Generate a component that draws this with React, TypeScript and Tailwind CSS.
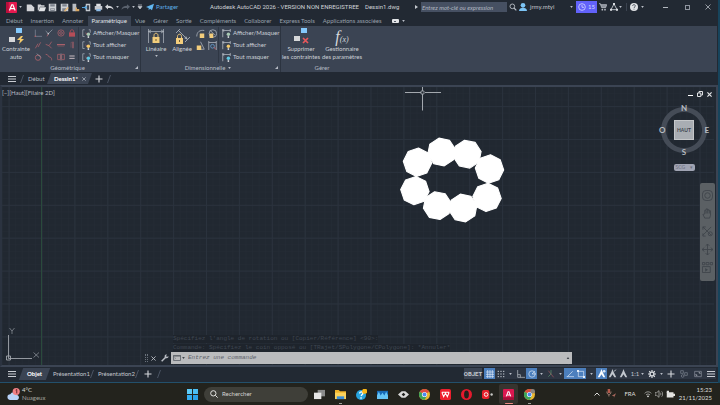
import React from "react";

type Kids = { children?: React.ReactNode };

/* ---------- small shared pieces ---------- */

function Caret({ className = "" }: { className?: string }) {
  return (
    <svg viewBox="0 0 4 3" className={`h-[2px] w-[3px] shrink-0 ${className}`} aria-hidden="true">
      <path d="M0 0h4L2 3z" fill="#b9bec7" />
    </svg>
  );
}

function Icon({ children, box = 12, className = "h-3 w-3" }: Kids & { box?: number; className?: string }) {
  return (
    <svg viewBox={`0 0 ${box} ${box}`} className={`shrink-0 ${className}`} fill="none" aria-hidden="true">
      {children}
    </svg>
  );
}

function IconButton({ label, className = "w-[11px]", children }: Kids & { label: string; className?: string }) {
  return (
    <button type="button" aria-label={label} className={`flex h-full shrink-0 items-center justify-center ${className}`}>
      {children}
    </button>
  );
}

function Menu() {
  return (
    <svg viewBox="0 0 8 6" className="h-[6px] w-2 shrink-0" aria-hidden="true">
      <path d="M0 .5h8M0 3h8M0 5.5h8" stroke="#c9cdd3" strokeWidth="1" />
    </svg>
  );
}

function Slash() {
  return (
    <svg viewBox="0 0 4 8" className="h-2 w-1 shrink-0" aria-hidden="true">
      <path d="M.5 8L3.5 0" stroke="#566070" strokeWidth=".8" />
    </svg>
  );
}

function Plus() {
  return (
    <svg viewBox="0 0 8 8" className="h-2 w-2 shrink-0" aria-hidden="true">
      <path d="M4 .5v7M.5 4h7" stroke="#d5d8dc" strokeWidth="1.1" />
    </svg>
  );
}

/* ---------- title bar ---------- */

function TitleBar() {
  return (
    <header className="flex h-[14px] shrink-0 items-center text-[#c3c7cd]">
      <button type="button" aria-label="Menu AutoCAD" className="ml-[6px] flex h-3 w-[16px] shrink-0 items-center justify-between">
        <Icon className="h-[11px] w-[11px]">
          <rect width="12" height="12" rx="1" fill="#e5194f" />
          <path d="M0 0h3v12H0z" fill="#b80f3c" />
          <path d="M3.8 9.200L6.300 3h1.200L10 9.200M5 7.200h3.900" stroke="#fff" strokeWidth="1.300" />
        </Icon>
        <Caret />
      </button>
      <div className="ml-[3px] flex h-full shrink-0 items-center">
        <IconButton label="Nouveau">
          <Icon className="h-[9px] w-[9px]"><path d="M1 2h6l4 4v5H1z" fill="#d2d4d8" /></Icon>
        </IconButton>
        <IconButton label="Ouvrir">
          <Icon className="h-[9px] w-[9px]"><path d="M1 2h4l1 1h4v2H4L2 10H1z" fill="#d2d4d8" /><path d="M4 5.500h8L10 11H2z" fill="#e2e4e7" /></Icon>
        </IconButton>
        <IconButton label="Enregistrer">
          <Icon className="h-[9px] w-[9px]"><path d="M1 1h10v10H1z" fill="#cdd0d4" /><path d="M3 1.500h6v3H3zM3 7h6v4H3z" fill="#7d838d" /><path d="M4 8.500h4" stroke="#ddd" /></Icon>
        </IconButton>
        <IconButton label="Enregistrer sous" className="w-3">
          <Icon className="h-[9px] w-[9px]"><path d="M1 1h10v10H1z" fill="#cdd0d4" /><path d="M3 1.500h6v3H3zM3 7h5v4H3z" fill="#7d838d" /><path d="M6 11l5-5" stroke="#e9b872" strokeWidth="2" /></Icon>
        </IconButton>
        <IconButton label="Ouvrir depuis le Web">
          <Icon className="h-[9px] w-[9px]"><path d="M2 1h5v10H2z" fill="#b8bcc2" /><path d="M6 6h2v2h3v3H6z" fill="#d7a662" /></Icon>
        </IconButton>
        <IconButton label="Enregistrer sur le Web">
          <Icon className="h-[9px] w-[9px]"><path d="M5 1h6v10H5z" fill="#c4c8ce" /><path d="M6.500 3h3v6h-3z" fill="#39424f" /><path d="M0 6h6M4 4l2 2-2 2" stroke="#58a6de" strokeWidth="1.500" /></Icon>
        </IconButton>
        <IconButton label="Imprimer" className="w-3">
          <Icon className="h-[9px] w-[9px]"><path d="M3 1h6v3H3z" fill="#dfe1e4" /><path d="M1 4h10v5H1z" fill="#c7cad0" /><path d="M3 8h6v3H3z" fill="#8dbbe6" /></Icon>
        </IconButton>
        <IconButton label="Annuler" className="w-[11px]">
          <Icon className="h-[9px] w-[9px]"><path d="M0 5l4-3.500v2C8 3.500 11 5 11.500 9 9.500 6.800 7 6.500 4 6.700v2z" fill="#d2d4d8" /></Icon>
        </IconButton>
        <Caret className="mx-px" />
        <IconButton label="Rétablir">
          <Icon className="h-[9px] w-[9px]"><path d="M12 5L8 1.500v2C4 3.500 1 5 .5 9 2.500 6.800 5 6.500 8 6.700v2z" fill="#59616d" /></Icon>
        </IconButton>
        <Caret className="mx-px" />
        <IconButton label="Personnaliser" className="w-2">
          <Icon box={6} className="h-[6px] w-[6px]"><path d="M1 1h4M1 2.500h4L3 5z" stroke="#c3c7cd" strokeWidth=".7" fill="#c3c7cd" /></Icon>
        </IconButton>
      </div>
      <button type="button" className="ml-[2px] flex w-[31px] shrink-0 items-center gap-[2px] text-[#5fb0e8]">
        <Icon className="h-2 w-2"><path d="M0 6l12-5-3 10-3-2.500L4 11V7.500z" fill="#62b7f0" /></Icon>
        Partager
      </button>
      <div className="ml-[33px] flex w-[205px] shrink-0 gap-[6px] whitespace-nowrap font-[Roboto,sans-serif] text-[#d0d3d8]">
        <h1>Autodesk AutoCAD 2026 - VERSION NON ENREGISTREE</h1>
        <span>Dessin1.dwg</span>
      </div>
      <svg viewBox="0 0 3 4" className="h-1 w-[3px] shrink-0" aria-hidden="true"><path d="M0 0v4l3-2z" fill="#c3c7cd" /></svg>
      <input
        type="search"
        aria-label="Rechercher"
        placeholder="Entrez mot-clé ou expression"
        className="ml-[3px] h-[10px] min-w-0 flex-1 bg-[#465062] px-px italic placeholder:text-[#b0b6c0]"
      />
      <IconButton label="Lancer la recherche" className="w-3">
        <Icon className="h-2 w-2"><circle cx="5" cy="5" r="3.500" stroke="#b5bac2" strokeWidth="1.400" /><path d="M7.500 7.500L11 11" stroke="#b5bac2" strokeWidth="1.800" /></Icon>
      </IconButton>
      <button type="button" className="flex w-[57px] shrink-0 items-center justify-between">
        <span className="flex items-center gap-[3px]">
          <Icon className="h-2 w-2"><circle cx="6" cy="3.500" r="3.500" fill="#7cc4f5" /><path d="M0 12c0-4 3-5 6-5s6 1 6 5z" fill="#7cc4f5" /></Icon>
          jrmy.mtyi
        </span>
        <Caret className="mr-[3px]" />
      </button>
      <button type="button" aria-label="15 jours restants" className="flex h-3 w-[21px] shrink-0 items-center justify-center gap-[2px] bg-[#6262fa] text-[#d6d7ff]">
        <Icon className="h-2 w-2"><circle cx="6" cy="6" r="5" stroke="#d6d7ff" strokeWidth="1.200" /><path d="M6 3v3.500h3" stroke="#d6d7ff" strokeWidth="1.200" /></Icon>
        15
      </button>
      <IconButton label="Boutique">
        <Icon className="h-2 w-2"><path d="M0 1h2l2 6h6l1.500-4.500h-9" stroke="#b9bdc4" strokeWidth="1.200" fill="#8b919b" /><circle cx="5" cy="10" r="1.300" fill="#b9bdc4" /><circle cx="9" cy="10" r="1.300" fill="#b9bdc4" /></Icon>
      </IconButton>
      <IconButton label="Applications">
        <Icon className="h-2 w-2"><path d="M6 1.500l4.500 8.500h-9z" stroke="#c9cdd3" strokeWidth="1.300" /><path d="M4.500 0h3v3h-3zM0 8.500h3v3H0zM9 8.500h3v3H9z" fill="#d9dce0" /></Icon>
      </IconButton>
      <Caret />
      <span className="ml-1 h-2 w-px bg-[#3b4350]" />
      <IconButton label="Aide" className="w-[14px]">
        <Icon className="h-2 w-2"><circle cx="6" cy="6" r="6" fill="#dfe1e4" /><path d="M4 4.500c0-3 4-2.500 4-.3C8 6 6 6 6 7.500M6 8.600v1.200" stroke="#39414d" strokeWidth="1.200" /></Icon>
      </IconButton>
      <Caret />
      <div className="ml-[10px] flex h-full shrink-0">
        <IconButton label="Réduire" className="w-[22px]"><span className="h-px w-[5px] bg-[#b3b8c0]" /></IconButton>
        <IconButton label="Agrandir" className="w-[22px]"><span className="h-[5px] w-[5px] border border-[#8f959f]" /></IconButton>
        <IconButton label="Fermer" className="w-5">
          <Icon box={6} className="h-[6px] w-[6px]"><path d="M.5.5l5 5M5.500.5l-5 5" stroke="#b3b8c0" strokeWidth=".8" /></Icon>
        </IconButton>
      </div>
    </header>
  );
}

/* ---------- ribbon ---------- */

const tabs = [
  "Début", "Insertion", "Annoter", "Paramétrique", "Vue", "Gérer", "Sortie",
  "Compléments", "Collaborer", "Express Tools", "Applications associées",
];

function RibbonTabs() {
  return (
    <nav className="flex h-3 shrink-0 items-end whitespace-nowrap pl-[2px] text-[#98a0ab]">
      {tabs.map((t) => (
        <a
          key={t}
          href="#ruban"
          className={`flex h-[10px] items-center px-1 ${t === "Paramétrique" ? "bg-[#3b4453] text-[#e4e6e9]" : ""}`}
        >
          {t}
        </a>
      ))}
      <button type="button" aria-label="Réduire le ruban" className="ml-[6px] flex h-[10px] items-center gap-[3px]">
        <span className="flex h-1 w-[7px] items-center justify-center rounded-[1px] bg-[#e3e5e8]">
          <span className="h-px w-[2px] bg-[#545c69]" />
        </span>
        <Caret />
      </button>
    </nav>
  );
}

const redStroke = "#a8606a";
const greyStroke = "#99a1ad";

const constraintIcons: [string, React.ReactNode][] = [
  ["Coïncidence", <><path d="M2 1v10h10" stroke="#8790a0" /><circle cx="2" cy="11" r="1.200" fill={redStroke} /></>],
  ["Colinéaire", <><path d="M1 3l4 4 6-6" stroke={greyStroke} strokeWidth="1.100" /><path d="M5 7l-2 4" stroke={redStroke} strokeWidth="1.300" /><circle cx="5" cy="7" r="1.200" fill="#c3c7cd" /></>],
  ["Concentrique", <><circle cx="6" cy="6" r="4.700" stroke={redStroke} strokeWidth="1.200" /><circle cx="6" cy="6" r="2" stroke={redStroke} strokeWidth="1.200" /></>],
  ["Fixe", <><path d="M1.500 5h9v6.500h-9z" fill="#b54d58" /><path d="M3.500 5V3.500c0-3 5-3 5 0V5" stroke="#b54d58" strokeWidth="1.400" /></>],
  ["Parallèle", <path d="M2 11l4-7M6 9l4-7" stroke={redStroke} strokeWidth="1.200" />],
  ["Perpendiculaire", <path d="M1 5l5 2 4 4M6 7l4-6" stroke={redStroke} strokeWidth="1.200" />],
  ["Horizontal", <><path d="M0 5.500h12" stroke={redStroke} strokeWidth="2" /><path d="M1 8h10" stroke="#7a5560" strokeWidth=".8" /></>],
  ["Vertical", <><path d="M7.500 1v10" stroke={redStroke} strokeWidth="1.800" /><path d="M4.500 2v8M4.500 2h3" stroke="#7a5560" /></>],
  ["Tangent", <><circle cx="6" cy="7" r="4" stroke={redStroke} strokeWidth="1.300" /><path d="M4 1l7 6" stroke={greyStroke} /></>],
  ["Lissage", <path d="M1 2c5 0 3 4 6 4 3 .5 3 3 3 5" stroke={redStroke} strokeWidth="1.300" />],
  ["Symétrie", <><path d="M1 2h4v8H1zM7 2h4v8H7z" stroke={redStroke} strokeWidth="1.200" /><path d="M6 0v12" stroke={greyStroke} strokeWidth=".6" /></>],
  ["Égal", <path d="M2 4.500h8M2 8h8" stroke="#c9bcc2" strokeWidth="1.500" />],
];

function Bulb({ tone, kind }: { tone: string; kind: "geo" | "dim" }) {
  return (
    <Icon className="h-[9px] w-[9px]">
      {kind === "geo" ? (
        <><path d="M3.500 1H1v9h2.500" stroke="#a6adb8" /><path d="M5 5l2 3" stroke={redStroke} strokeWidth="1.200" /><path d="M9 1h2v4" stroke="#a6adb8" /></>
      ) : (
        <path d="M1 0v11M11 0v4M1 2h10M1 2l2-1.500M1 2l2 1.500" stroke="#b6bbc4" />
      )}
      <circle cx="8.500" cy="7" r="2.300" fill={tone} />
      <path d="M7.500 9.500h2V12h-2z" fill="#cfd2d6" />
    </Icon>
  );
}

function ShowHide({ kind }: { kind: "geo" | "dim" }) {
  const rows: [string, string][] = [["Afficher/Masquer", "#a8c9b4"], ["Tout afficher", "#f3c969"], ["Tout masquer", "#5fc8e2"]];
  return (
    <div className="flex flex-col border-l border-[#2f3744] pl-[3px]">
      {rows.map(([label, tone]) => (
        <button key={label} type="button" className="flex h-[12px] items-center gap-[2px] whitespace-nowrap">
          <Bulb tone={tone} kind={kind} />
          {label}
        </button>
      ))}
    </div>
  );
}

function BigButton({ icon, lines, caret, className }: { icon: React.ReactNode; lines: string[]; caret?: boolean; className: string }) {
  return (
    <button type="button" className={`flex shrink-0 flex-col items-center whitespace-nowrap leading-[8px] ${className}`}>
      <span className="mb-px flex h-[17px] items-center">{icon}</span>
      {lines.map((l) => <span key={l}>{l}</span>)}
      {caret && <Caret className="mt-[2px]" />}
    </button>
  );
}

function Panel({ title, caret, launcher, className, children }: Kids & { title: string; caret?: boolean; launcher?: boolean; className: string }) {
  return (
    <section className={`flex shrink-0 flex-col border-r border-[#2c3440] ${className}`}>
      <div className="flex h-[37px] pt-px">{children}</div>
      <div className="flex h-[9px] items-center pr-[2px] text-[#b7bcc5]">
        <h2 className="flex flex-1 items-center justify-center gap-[3px]">{title}{caret && <Caret />}</h2>
        {launcher && (
          <button type="button" aria-label={`Options ${title}`}>
            <Icon box={4} className="h-[3px] w-[3px]"><path d="M0 4h4V0z" fill="#b7bcc5" /></Icon>
          </button>
        )}
      </div>
    </section>
  );
}

function LockShape({ x, y }: { x: number; y: number }) {
  return (
    <g transform={`translate(${x} ${y})`}>
      <path d="M1.500 4V2.500c0-3 4-3 4 0V4" stroke="#f0c878" strokeWidth="1" fill="none" />
      <path d="M0 4h7v6H0z" fill="#f3cd7c" />
      <path d="M3.500 6v2" stroke="#6b5a35" strokeWidth="1" />
    </g>
  );
}

function Ribbon() {
  return (
    <div id="ruban" className="mr-px flex h-[46px] shrink-0 bg-[#3b4453] text-[#cdd1d7]">
      <Panel title="Géométrique" launcher className="w-[141px]">
        <BigButton
          className="w-8"
          lines={["Contrainte", "auto"]}
          icon={
            <Icon box={16} className="h-4 w-4">
              <path d="M8 0h6v5H8z" fill="#84c8fb" /><path d="M1 9h6v5H1z" fill="#d6d7d9" />
              <path d="M13 8l-4 4h3l-1 4 5-5h-3l2-3z" fill="#f5cb6c" />
            </Icon>
          }
        />
        <div className="grid h-9 w-[46px] grid-cols-4">
          {constraintIcons.map(([label, art]) => (
            <IconButton key={label} label={label}><Icon className="h-2 w-2">{art}</Icon></IconButton>
          ))}
        </div>
        <ShowHide kind="geo" />
      </Panel>
      <Panel title="Dimensionnelle" caret launcher className="w-[140px]">
        <BigButton
          className="w-[30px]"
          lines={["Linéaire"]}
          caret
          icon={
            <Icon box={16} className="h-4 w-4">
              <path d="M.5 1v14M15.500 1v14M.5 3.500h15M3 2L.5 3.500 3 5M13 2l2.500 1.500L13 5" stroke="#b4bac3" strokeWidth=".7" />
              <LockShape x={4.5} y={5} />
            </Icon>
          }
        />
        <BigButton
          className="w-[22px]"
          lines={["Alignée"]}
          icon={
            <Icon box={16} className="h-4 w-4">
              <path d="M2 5l4-4M11 14l5-5M4 2l9 9M13 11l-1-2.500M13 11l-2.500-1" stroke="#b4bac3" strokeWidth=".8" />
              <LockShape x={2} y={6} />
            </Icon>
          }
        />
        <div className="grid h-6 w-[25px] grid-cols-2 pl-[2px]">
          <IconButton label="Rayon"><Icon className="h-[9px] w-[9px]"><path d="M1 10C1 4 5 1 11 2" stroke="#b4bac3" /><path d="M5 6h6v6H5z" fill="#f3cd7c" /></Icon></IconButton>
          <IconButton label="Diamètre"><Icon className="h-[9px] w-[9px]"><circle cx="6.500" cy="6" r="5" stroke="#b4bac3" /><path d="M3 2l6 6" stroke="#b4bac3" /><path d="M2 6h5v6H2z" fill="#f3cd7c" /></Icon></IconButton>
          <IconButton label="Angulaire"><Icon className="h-[9px] w-[9px]"><path d="M6 1l5 10H6" stroke="#b4bac3" /><path d="M1 6h6v6H1z" fill="#f3cd7c" /></Icon></IconButton>
          <IconButton label="Convertir"><Icon className="h-[9px] w-[9px]"><path d="M1 0v12M11 0v12M1 2h10" stroke="#b4bac3" /><circle cx="6" cy="7" r="2.500" stroke="#6ba4d8" /><path d="M8 8l2 3" stroke={redStroke} strokeWidth="1.400" /></Icon></IconButton>
        </div>
        <ShowHide kind="dim" />
      </Panel>
      <section className="flex w-[82px] shrink-0 flex-col">
        <div className="flex h-[37px] pt-px">
          <BigButton
            className="w-10"
            lines={["Supprimer", "les contraintes"]}
            icon={
              <Icon box={16} className="h-4 w-4">
                <path d="M8 0h6v5H8z" fill="#84c8fb" /><path d="M1 8h6v5H1z" fill="#d6d7d9" />
                <path d="M10 10l5 5M15 10l-5 5" stroke="#e8585c" strokeWidth="1.700" />
              </Icon>
            }
          />
          <BigButton
            className="w-[42px]"
            lines={["Gestionnaire", "des paramètres"]}
            icon={<span className="pt-[3px] font-['Liberation_Serif',serif] text-[16px] italic leading-none text-[#d6d9dd]">f<span className="text-[8px]">(x)</span></span>}
          />
        </div>
        <h2 className="flex h-[9px] items-center justify-center text-[#b7bcc5]">Gérer</h2>
      </section>
    </div>
  );
}

/* ---------- drawing tabs ---------- */

function DocTabs() {
  return (
    <nav className="flex h-[13px] shrink-0 items-center pl-2 text-[#b7bcc5]">
      <button type="button" aria-label="Menu des dessins"><Menu /></button>
      <span className="ml-1 flex"><Slash /></span>
      <a href="#dessin" className="ml-1 w-[21px]">Début</a>
      <div className="relative flex h-[11px] w-[41px] items-center justify-between pl-[5px] pr-1 text-white">
        <span className="absolute inset-0 -skew-x-[20deg] bg-[#3b4453]" />
        <a href="#dessin" className="relative font-bold">Dessin1*</a>
        <button type="button" aria-label="Fermer Dessin1" className="relative">
          <Icon box={6} className="h-1 w-1"><path d="M.5.5l5 5M5.500.5l-5 5" stroke="#aab0ba" strokeWidth="1.200" /></Icon>
        </button>
      </div>
      <button type="button" aria-label="Nouveau dessin" className="ml-[5px]"><Plus /></button>
      <span className="ml-1 flex"><Slash /></span>
    </nav>
  );
}

/* ---------- drawing area ---------- */

const octagons: [number, number, number][] = [
  [417.5, 162.3, -86], [441.6, 152, -101], [467.2, 154.2, -101], [489.5, 169, -86],
  [487, 197.4, -86], [463, 208, -101], [437.3, 205.6, -101], [414.9, 190.6, -86],
];

function octagonPoints(cx: number, cy: number, start: number) {
  return Array.from({ length: 8 }, (_, i) => {
    const a = ((start + i * 45) * Math.PI) / 180;
    return `${(cx + 14.2 * Math.cos(a)).toFixed(1)},${(cy + 14.2 * Math.sin(a)).toFixed(1)}`;
  }).join(" ");
}

function ViewCube() {
  return (
    <div className="absolute right-[6px] top-[17px] flex w-[52px] flex-col items-center">
      <div className="relative flex h-[52px] w-[52px] items-center justify-center text-[8px] font-bold leading-none text-[#b9bdc2]">
        <span className="absolute inset-[3px] rounded-full border-[5px] border-[#454c57]" />
        <span className="absolute inset-x-0 top-0 text-center">N</span>
        <span className="absolute inset-x-0 bottom-0 text-center">S</span>
        <span className="absolute left-px">O</span>
        <span className="absolute right-px">E</span>
        <button type="button" className="relative h-5 w-5 border border-[#c5c7ca] bg-[#a9adb3] text-[5px] font-bold text-[#3f464f]">HAUT</button>
      </div>
      <button type="button" className="mt-2 flex h-[7px] w-[21px] items-center justify-between rounded-[2px] bg-[#a0a4b3] px-[2px] text-[5px] leading-none text-[#6c7080]">
        SCG<span>▾</span>
      </button>
    </div>
  );
}

function NavBar() {
  const s = { stroke: "#3f454c", strokeWidth: 1 };
  return (
    <div className="absolute right-px top-24 flex h-[98px] w-[15px] flex-col items-center justify-between rounded-[2px] bg-[#5b6064] py-1">
      <button type="button" aria-label="Disque de navigation" className="mt-[3px]">
        <Icon className="h-[11px] w-[11px]"><rect x=".5" y=".5" width="11" height="11" rx="4" {...s} /><circle cx="6" cy="6" r="3" {...s} /></Icon>
      </button>
      <button type="button" aria-label="Panoramique">
        <Icon className="h-[11px] w-[11px]"><path d="M3 11L1 7l2-.5V2.500h1.500V1h1.500v1h1.700v1h1.600v5l-1 3zM4.500 3v3M6.200 2v4M8 3v3" {...s} /></Icon>
      </button>
      <button type="button" aria-label="Zoom">
        <Icon className="h-[11px] w-[11px]"><path d="M1 1l9 9M10 1L1 10M1 4V1h3M1 8v3h3" {...s} /><circle cx="9" cy="8.500" r="2.200" {...s} /></Icon>
      </button>
      <button type="button" aria-label="Orbite">
        <Icon className="h-[11px] w-[11px]"><path d="M6 0v12M4 2l2-2 2 2M4 10l2 2 2-2" {...s} /><path d="M2.500 4L0 6l2.500 2M9.500 4L12 6l-2.500 2M0 6h12" {...s} /></Icon>
      </button>
      <button type="button" aria-label="ShowMotion" className="mb-1">
        <Icon className="h-[11px] w-[11px]"><path d="M.5.5h2.500v2.500H.5zM4.500.5h3v2.500h-3zM9 .5h2.500v2.500H9zM.5 5h8.500v6.500H.5z" {...s} /><path d="M3.500 6.500v4l3-2z" fill="#3f454c" /></Icon>
      </button>
    </div>
  );
}

function DrawingArea() {
  return (
    <main id="dessin" className="relative min-h-0 flex-1 overflow-hidden border-2 border-[#3b4453] border-l-[#2b3340] bg-[#212831]">
      <svg className="absolute -left-[2px] -top-[87px] h-[405px] w-full min-w-full" aria-hidden="true">
        <defs>
          <pattern id="minor" width="6.580" height="6.580" patternUnits="userSpaceOnUse" x="41.500" y="139">
            <path d="M0 0H6.580M0 0V6.580" stroke="#252c36" strokeWidth="1" fill="none" />
          </pattern>
          <pattern id="major" width="32.900" height="32.900" patternUnits="userSpaceOnUse" x="41.500" y="139">
            <path d="M0 .5H32.900M.5 0V32.900" stroke="#2a323d" strokeWidth="1" fill="none" />
          </pattern>
        </defs>
        <rect width="100%" height="100%" fill="url(#minor)" />
        <rect width="100%" height="100%" fill="url(#major)" />
        <path d="M41.500 87V366" stroke="#2a4a3c" strokeWidth="1" />
        <g fill="#fff" stroke="#fff" strokeWidth="1.100" strokeLinejoin="round">
          {octagons.map(([x, y, a]) => <polygon key={`${x}-${y}`} points={octagonPoints(x, y, a)} />)}
        </g>
        <g stroke="#a3a8ae" strokeWidth="1" fill="none">
          <path d="M405 92.500h16M425 92.500h16M422.500 87v4M422.500 94v16.500" />
          <path d="M421 91h3v3h-3z" strokeWidth=".8" />
        </g>
        <g stroke="#a0a5ac" strokeWidth=".9" fill="none">
          <path d="M8.500 335v23.500H32M6.500 356h4v4h-4z" />
          <path d="M9.500 328l2.500 3 2.500-3M12 331v3M33.500 352.500l5.500 5M39 352.500l-5.500 5" stroke="#858b93" strokeWidth=".8" />
        </g>
      </svg>
      <div className="absolute left-0 top-[2px] flex text-[#b9bdc3]">
        <button type="button">[−]</button><button type="button">[Haut]</button><button type="button">[Filaire 2D]</button>
      </div>
      <div className="absolute right-1 top-1 flex gap-1">
        <button type="button" aria-label="Réduire le dessin" className="flex h-[5px] w-[5px] items-end"><span className="h-px w-[5px] bg-white" /></button>
        <button type="button" aria-label="Restaurer le dessin">
          <Icon box={6} className="h-[6px] w-[6px]"><path d="M2 2V.5h3.500V4H4M.5 2h3.300v3.500H.5z" stroke="#dfe1e4" /></Icon>
        </button>
        <button type="button" aria-label="Fermer le dessin">
          <Icon box={6} className="h-[5px] w-[5px]"><path d="M.5.5l5 5M5.500.5l-5 5" stroke="#e4e6e9" strokeWidth="1.400" /></Icon>
        </button>
      </div>
      <ViewCube />
      <NavBar />
      <div className="absolute bottom-[1px] left-[143px] right-36 font-['Liberation_Mono',monospace]">
        <div className="ml-7 flex flex-col items-start gap-px whitespace-nowrap leading-[8px] text-[#3f4651]">
          <p className="bg-[#1e242c]">Spécifiez l'angle de rotation ou [Copier/Référence] &lt;90&gt;:</p>
          <p className="bg-[#1e242c]">Commande: Spécifiez le coin opposé ou [TRajet/SPolygone/CPolygone]: *Annuler*</p>
        </div>
        <div className="flex h-3 items-center">
          <span className="h-2 w-[3px] shrink-0 border-x border-dotted border-[#6b727c]" />
          <IconButton label="Fermer la ligne de commande" className="w-[11px]">
            <Icon box={6} className="h-[5px] w-[5px]"><path d="M.5.5l5 5M5.500.5l-5 5" stroke="#c3c7cd" strokeWidth="1" /></Icon>
          </IconButton>
          <IconButton label="Personnaliser" className="w-3">
            <Icon className="h-2 w-2"><path d="M1 11l6-6" stroke="#b9bdc4" strokeWidth="2.200" /><path d="M11 3L9 4.500 7.500 3 9 1C6 0 4.500 3 6 5.500 8 7.500 12 6 11 3z" fill="#b9bdc4" /></Icon>
          </IconButton>
          <label className="flex h-full min-w-0 flex-1 items-center gap-[3px] bg-[#babbbd] px-[2px]">
            <span className="flex w-3 shrink-0 items-center gap-px">
              <svg viewBox="0 0 8 6" className="h-[6px] w-2" fill="none" aria-hidden="true"><path d="M.5.5h7v5h-7z" stroke="#5b6067" strokeWidth=".8" /><path d="M0 1h8" stroke="#5b6067" /><path d="M1.500 2.500l1 .8-1 .8" stroke="#5b6067" strokeWidth=".6" /></svg>
              <svg viewBox="0 0 4 3" className="h-[2px] w-[3px]" aria-hidden="true"><path d="M0 0h4L2 3z" fill="#3f444b" /></svg>
            </span>
            <input aria-label="Commande" placeholder="Entrez une commande" className="min-w-0 flex-1 bg-transparent italic placeholder:text-[#5e636b]" />
            <svg viewBox="0 0 4 3" className="h-[2px] w-1" aria-hidden="true"><path d="M0 3h4L2 0z" fill="#3f444b" /></svg>
          </label>
        </div>
      </div>
    </main>
  );
}

/* ---------- layout tabs and status bar ---------- */

function StatusButton({ label, on, className = "w-[11px]", children }: Kids & { label: string; on?: boolean; className?: string }) {
  return (
    <button
      type="button"
      aria-label={label}
      className={`flex h-[11px] shrink-0 items-center justify-center ${on ? "bg-[#4c7fbd]" : "bg-[#2d3542]"} ${className}`}
    >
      {children}
    </button>
  );
}

function Person({ fill }: { fill: string }) {
  return <path d="M6 0l1.500 4L11 11H8.500L6 7l-2.500 4H1l3.500-7z" fill={fill} />;
}

function StatusBar() {
  const w = "#c3c8cf";
  return (
    <footer className="flex h-4 shrink-0 items-center border-b border-[#23506b] pb-[2px] pl-2 text-[#c3c7cd]">
      <button type="button" aria-label="Menu des présentations"><Menu /></button>
      <nav className="ml-[5px] flex items-center">
        <a href="#dessin" className="relative flex h-3 w-[27px] items-center justify-center font-bold text-white">
          <span className="absolute inset-0 -skew-x-[20deg] bg-[#3b4453]" />
          <span className="relative">Objet</span>
        </a>
        <a href="#dessin" className="ml-[5px] w-[37px]">Présentation1</a>
        <Slash />
        <a href="#dessin" className="ml-1 w-[37px]">Présentation2</a>
        <Slash />
      </nav>
      <button type="button" aria-label="Nouvelle présentation" className="ml-[5px]"><Plus /></button>
      <span className="ml-[5px] flex"><Slash /></span>
      <div className="ml-auto mr-[2px] flex items-center">
        <button type="button" className="mr-[2px] flex h-[11px] w-[18px] items-center justify-center bg-[#3b4453] font-[Roboto,sans-serif] font-bold">OBJET</button>
        <StatusButton label="Grille" on><Icon className="h-2 w-2"><path d="M0 3h12M0 6.500h12M0 10h12M2.500 0v12M6 0v12M9.500 0v12" stroke="#e3ecf7" /></Icon></StatusButton>
        <StatusButton label="Accrochage"><Icon className="h-2 w-2"><path d="M1 2h10M1 6h10M1 10h10" stroke={w} strokeWidth="1.500" strokeDasharray="2 2" /></Icon></StatusButton>
        <StatusButton label="Options accrochage" className="w-[9px]"><Caret /></StatusButton>
        <StatusButton label="Mode ortho"><Icon className="h-2 w-2"><path d="M1 0v11h11M1 7h4v4" stroke={w} /></Icon></StatusButton>
        <StatusButton label="Repérage polaire" on><Icon className="h-2 w-2"><circle cx="6" cy="6" r="4.800" stroke="#e3ecf7" /><path d="M6 6h6M6 6l4-4" stroke="#e3ecf7" /></Icon></StatusButton>
        <StatusButton label="Options polaire" className="w-2"><Caret /></StatusButton>
        <StatusButton label="Isométrique"><Icon className="h-2 w-2"><path d="M2 1l8 10" stroke="#a75b62" /><path d="M6 0v6l-4 4" stroke="#5a9a70" /></Icon></StatusButton>
        <StatusButton label="Options isométrique" className="w-2"><Caret /></StatusButton>
        <StatusButton label="Repérage objet" on><Icon className="h-2 w-2"><path d="M1 10h11M2 10l8-8" stroke="#e3ecf7" /></Icon></StatusButton>
        <StatusButton label="Accrochage objet" on><Icon className="h-2 w-2"><path d="M2 2h8v8H2z" stroke="#e3ecf7" /><path d="M0 0h3v3H0zM9 9h3v3H9z" fill="#e3ecf7" /></Icon></StatusButton>
        <StatusButton label="Options objet" className="w-[10px]"><Caret /></StatusButton>
        <StatusButton label="Annotations" on><Icon className="h-[9px] w-[9px]"><Person fill="#fff" /><circle cx="9.500" cy="3" r="1.800" fill="#dbe8f8" /></Icon></StatusButton>
        <StatusButton label="Échelle automatique"><Icon className="h-[9px] w-[9px]"><Person fill={w} /><path d="M8 3l3-2" stroke={w} /></Icon></StatusButton>
        <StatusButton label="Annotation"><Icon className="h-[9px] w-[9px]"><Person fill={w} /></Icon></StatusButton>
        <StatusButton label="Échelle" className="w-[17px] gap-[2px]">1:1<Caret /></StatusButton>
        <StatusButton label="Espace de travail" className="w-3">
          <Icon className="h-2 w-2"><circle cx="6" cy="6" r="3" stroke="#d9dce0" strokeWidth="2.200" /><path d="M6 0v2M6 10v2M0 6h2M10 6h2M1.800 1.800L3 3M9 9l1.200 1.200M10.200 1.800L9 3M3 9l-1.200 1.200" stroke="#d9dce0" strokeWidth="1.800" /></Icon>
        </StatusButton>
        <StatusButton label="Options espace" className="w-[7px]"><Caret /></StatusButton>
        <StatusButton label="Ajouter" className="w-3"><Plus /></StatusButton>
        <StatusButton label="Isoler les objets" className="w-[14px]"><Icon className="h-2 w-2"><path d="M1 1h4v4H1zM7 4h4v4H7z" stroke="#7d8591" /><circle cx="4" cy="9" r="2" stroke="#7d8591" /></Icon></StatusButton>
        <StatusButton label="Plein écran" className="w-[14px]"><Icon className="h-2 w-2"><path d="M1 2h10v8H1z" stroke="#8f96a1" /><path d="M7 4h2v2M3 6v2h2" stroke={w} /></Icon></StatusButton>
        <StatusButton label="Personnalisation"><Menu /></StatusButton>
      </div>
    </footer>
  );
}

/* ---------- Windows task bar ---------- */

function Chrome() {
  return (
    <>
      <circle cx="6" cy="6" r="6" fill="#e9b62f" />
      <path d="M6 6L.8 3A6 6 0 0 1 11.200 3z" fill="#dd4b3e" />
      <path d="M6 6L.8 3A6 6 0 0 0 6 12l2.600-4.500z" fill="#3da35a" />
      <circle cx="6" cy="6" r="2.800" fill="#f3f5f7" />
      <circle cx="6" cy="6" r="2.100" fill="#4a8af0" />
    </>
  );
}

const taskApps: [string, React.ReactNode][] = [
  ["Vue des tâches", <><path d="M4 1h8v7H4z" fill="#8a8b8a" /><path d="M0 4h8v7H0z" fill="#e6e6e5" /></>],
  ["Explorateur", <><path d="M0 1h4l1.500 1.500H12V11H0z" fill="#f0b429" /><path d="M0 4h12v7H0z" fill="#fbd35c" /><path d="M2 8h8v3H2z" fill="#3a8fd8" /></>],
  ["Assistance", <><circle cx="5.500" cy="6.500" r="5.500" fill="#27a3dc" /><path d="M4 5c0-3 4-2 3.500 0L5.500 7.500M5.500 9v1.500" stroke="#fff" strokeWidth="1.500" /><circle cx="9.500" cy="2.500" r="2.800" fill="#fbb816" /></>],
  ["Moniteur", <><path d="M0 2h12v9H0z" fill="#1769b5" /><path d="M0 7l2-4 2 4 2-3 2 3 2-4 2 4v4H0z" fill="#66c4f5" /></>],
  ["Visionneuse", <><path d="M0 6l4-3.500h4L12 6 8 9.500H4z" fill="#d9d9d8" /><path d="M6 4l2 2-2 2-2-2z" fill="#1f1f1c" /></>],
  ["Chrome", <Chrome />],
  ["WPS", <><rect y="0" width="12" height="12" rx="2" fill="#ee1f2d" /><path d="M2 3.500l2 5 2-4 2 4 2-5M2 3.500h8" stroke="#fff" strokeWidth="1.100" /></>],
  ["Opera", <><circle cx="6" cy="6" r="6" fill="#e51a2d" /><ellipse cx="6" cy="6" rx="2.600" ry="4.300" fill="#22221d" /></>],
  ["Enregistreur", <><rect y="1" width="8" height="10" rx="2" fill="#e8202b" /><circle cx="4.500" cy="6" r="2" stroke="#fff" /><circle cx="10.500" cy="6" r="1.300" fill="#c9c9c6" /></>],
  ["AutoCAD", <><rect width="12" height="12" rx="1" fill="#dc1750" /><path d="M0 9h12v3H0z" fill="#a50f38" /><path d="M3.500 8L5.500 3h1l2 5M4.400 6.500h3.200" stroke="#fff" strokeWidth="1.100" /></>],
  ["Chrome, profil", <><Chrome /><circle cx="9.500" cy="2.500" r="2.500" fill="#8b8680" /></>],
];

function TaskBar() {
  return (
    <footer className="flex h-[22px] shrink-0 items-center bg-[#23231d] text-[#dededb]">
      <button type="button" className="flex w-[187px] items-center gap-[2px] pl-[7px] text-left leading-[8px]">
        <Icon className="h-[13px] w-[13px]">
          <path d="M3 11a2.600 2.600 0 0 1 0-5.200 3.500 3.500 0 0 1 6.500.7A2.400 2.400 0 0 1 9.500 11z" fill="#b9d3f7" />
          <circle cx="8.500" cy="3.300" r="3.300" fill="#f08084" /><path d="M8 2l1-.6V5" stroke="#5a1d20" strokeWidth=".8" />
        </Icon>
        <span><span className="block">4°C</span><span className="block text-[#a3a39f]">Nuageux</span></span>
      </button>
      <button type="button" aria-label="Démarrer" className="grid h-[11px] w-[11px] grid-cols-2 gap-px">
        <span className="bg-[#5ccbf8]" /><span className="bg-[#4bc0f5]" /><span className="bg-[#35aef0]" /><span className="bg-[#2ba4ec]" />
      </button>
      <label className="ml-[6px] flex h-[15px] w-[104px] items-center gap-1 rounded-full bg-[#3f3f39] px-[6px]">
        <Icon className="h-2 w-2"><circle cx="5" cy="5" r="4" stroke="#e3e3e0" strokeWidth="1.500" /><path d="M8 8l3.500 3.500" stroke="#e3e3e0" strokeWidth="1.500" /></Icon>
        <input placeholder="Rechercher" className="min-w-0 flex-1 bg-transparent placeholder:text-[#d5d5d1]" />
      </label>
      <div className="ml-px flex h-full items-center">
        {taskApps.map(([label, art]) => (
          <button
            key={label}
            type="button"
            aria-label={label}
            className={`relative mx-px flex h-5 w-[19px] items-center justify-center rounded-[2px] ${label === "AutoCAD" ? "bg-[#37342f]" : ""}`}
          >
            <Icon className="h-[11px] w-[11px]">{art}</Icon>
            {label === "AutoCAD" && <span className="absolute bottom-0 h-px w-2 rounded-full bg-[#ef8b83]" />}
            {(label === "Explorateur" || label === "Chrome, profil") && <span className="absolute bottom-0 h-px w-[3px] bg-[#a0a09b]" />}
          </button>
        ))}
      </div>
      <div className="ml-auto flex h-full items-center pr-2">
        <IconButton label="Icônes cachées"><Icon box={6} className="h-[6px] w-[6px]"><path d="M.5 4.500L3 2l2.500 2.500" stroke="#dededb" /></Icon></IconButton>
        <IconButton label="Micro" className="w-[18px]"><Icon className="h-[10px] w-[10px]"><path d="M2 0h3v5H2z" fill="#b55a4b" /><path d="M1 3c0 5 5 5 5 0M3.500 7v2" stroke="#b08a7f" /><path d="M12 5l-5 3 3 1-1 3z" fill="#a7665b" /></Icon></IconButton>
        <button type="button" className="w-5">FRA</button>
        <IconButton label="Wi-Fi" className="ml-[2px] w-3"><Icon className="h-2 w-2"><path d="M1 5c3-3 7-3 10 0M3 7.500c2-2 4-2 6 0" stroke="#a3a39f" strokeWidth="1.400" /><circle cx="6" cy="9.500" r="1.400" fill="#dededb" /></Icon></IconButton>
        <IconButton label="Volume" className="w-[10px]"><Icon className="h-2 w-2"><path d="M0 4h2.500L6 1v10L2.500 8H0z" stroke="#c9c9c5" /><path d="M8 4c1 1 1 3 0 4M10 2c2 2 2 6 0 8" stroke="#c9c9c5" /></Icon></IconButton>
        <IconButton label="Batterie" className="w-3"><Icon className="h-[9px] w-[9px]"><path d="M1 3h9v7H1zM10 5h2v3h-2z" fill="#e3e3e0" /><path d="M1 1h3v3H1z" fill="#e3e3e0" /></Icon></IconButton>
        <button type="button" className="w-9 text-right leading-[8px]"><span className="block">15:23</span><span className="block">21/11/2025</span></button>
      </div>
    </footer>
  );
}

export default function App() {
  return (
    <div className="flex h-screen w-full flex-col overflow-hidden bg-[#222933] font-[Lato,'Open_Sans',sans-serif] text-[6px] leading-[8px]">
      <div className="flex min-h-0 flex-1 flex-col border-r-2 border-[#17445c]">
        <TitleBar />
        <RibbonTabs />
        <Ribbon />
        <DocTabs />
        <DrawingArea />
        <StatusBar />
      </div>
      <TaskBar />
    </div>
  );
}
